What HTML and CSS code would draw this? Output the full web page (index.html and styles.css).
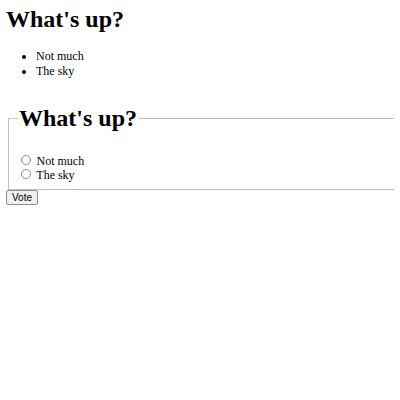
FILE: index.html
```html
<!DOCTYPE html>
<html>
<head>
<meta charset="utf-8">
<link rel="stylesheet" href="styles.css">
</head>
<body>
<h1 class="title">What's up?</h1>
<ul class="answers">
  <li>Not much</li>
  <li>The sky</li>
</ul>
<form class="poll">
  <fieldset class="poll-set">
    <legend class="poll-legend"><h1 class="poll-title">What's up?</h1></legend>
    <div class="choice"><input type="radio" name="choice" id="c1" class="radio"> <label for="c1">Not much</label></div>
    <div class="choice"><input type="radio" name="choice" id="c2" class="radio"> <label for="c2">The sky</label></div>
  </fieldset>
  <button type="submit" class="vote">Vote</button>
</form>
</body>
</html>
```

FILE: styles.css
```css
html {
  background: #fff;
  overflow: hidden;
}
body {
  margin: 6px;
  font-family: "Liberation Serif", "Times New Roman", serif;
  font-size: 12px;
  color: #000;
}
.title {
  font-size: 24px;
  font-weight: bold;
  margin: 0 0 16px;
}
.answers {
  margin: 12px 0 10px;
  padding-left: 30px;
}
.poll {
  margin: 0;
}
.poll-set {
  margin: 0 1.5px;
  padding: 5.5px 9px 7.5px;
  border: 1px solid #c0c0c0;
  min-width: 420px;
  box-sizing: border-box;
}
.poll-legend {
  padding: 0 1.5px;
}
.poll-title {
  font-size: 24px;
  margin: 16px 0;
}
.choice {
  line-height: 14px;
}
.radio {
  appearance: none;
  -webkit-appearance: none;
  box-sizing: border-box;
  width: 10px;
  height: 10px;
  margin: 0 2.25px 0 3.75px;
  border: 1px solid #8a8a8a;
  border-radius: 50%;
  background: #fff;
  vertical-align: baseline;
}
.vote {
  font-family: "Liberation Sans", Arial, sans-serif;
  font-size: 10px;
  padding: 1px 5px;
  margin: 0;
  background: #efefef;
  border: 1px solid #8f8f8f;
  border-radius: 2px;
  color: #000;
}
```
